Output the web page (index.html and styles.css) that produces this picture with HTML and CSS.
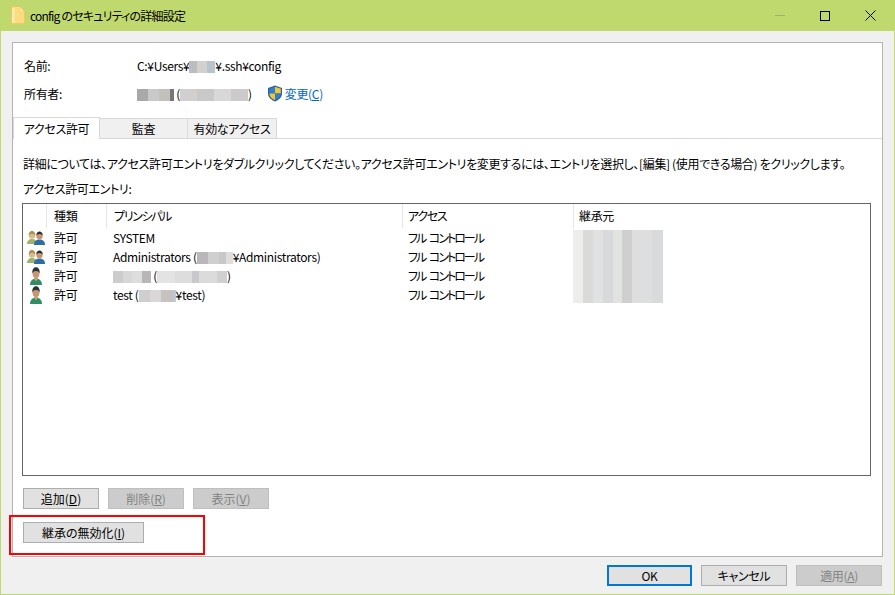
FILE: index.html
```html
<!DOCTYPE html>
<html lang="ja">
<head>
<meta charset="utf-8">
<title>config のセキュリティの詳細設定</title>
<link rel="stylesheet" href="styles.css">
</head>
<body>
<div class="window">
  <header class="titlebar">
    <svg class="folder" width="14" height="18" viewBox="0 0 14 18"><path d="M.5.5h8l5 5v12H.5z" fill="#fbdc7e" stroke="#efc860"/><path d="M9 1v5h4" fill="#fdeeb5" stroke="#f2d27a"/><path d="M1 2h3v15H1z" fill="#fde9a6"/></svg>
    <span class="title">config のセキュリティの詳細設定</span>
    <div class="controls">
      <span class="ctl"><i class="min"></i></span>
      <span class="ctl"><i class="max"></i></span>
      <span class="ctl"><svg width="11" height="11" viewBox="0 0 11 11"><path d="M.5.5l10 10M10.5.5l-10 10" stroke="#000" stroke-width="1"/></svg></span>
    </div>
  </header>

  <main class="body">
    <section class="panel">
      <div class="info">
        <div class="info-row">
          <span class="info-label">名前:</span>
          <span class="info-value">C:¥Users¥<i class="blur b-user"></i>¥.ssh¥config</span>
        </div>
        <div class="info-row">
          <span class="info-label">所有者:</span>
          <span class="info-value"><i class="blur b-owner"></i>&nbsp;(<i class="blur b-owner2"></i>)</span>
          <svg class="shield" width="16" height="17" viewBox="0 0 16 17"><path d="M8 .5l7 2.500v5.500c0 4-3.500 6.500-7 8-3.500-1.500-7-4-7-8V3z" fill="#2b5f9e"/><path d="M8 1.800V8.500H2.200V3.800z" fill="#2f7fd0"/><path d="M8 1.800l5.800 2V8.500H8z" fill="#f6c42f"/><path d="M2.300 8.500H8v6.800c-3-1.400-5.500-3.400-5.700-6.800z" fill="#f6c42f"/><path d="M8 8.500h5.700c-.2 3.400-2.700 5.400-5.700 6.800z" fill="#2f7fd0"/></svg>
          <a class="link">変更(<u>C</u>)</a>
        </div>
      </div>
      <nav class="tabs">
        <span class="tab active">アクセス許可</span>
        <span class="tab t2">監査</span>
        <span class="tab t3">有効なアクセス</span>
      </nav>
      <div class="tab-body">
        <p class="help">詳細については、アクセス許可エントリをダブルクリックしてください。アクセス許可エントリを変更するには、エントリを選択し、[編集] (使用できる場合) をクリックします。</p>
        <p class="caption">アクセス許可エントリ:</p>
        <div class="list">
          <div class="list-head">
            <span class="c0"></span>
            <span class="c1">種類</span>
            <span class="c2 kana">プリンシパル</span>
            <span class="c3 kana">アクセス</span>
            <span class="c4">継承元</span>
          </div>
          <div class="rows">
            <i class="blur b-inherit"></i>
            <div class="row">
              <span class="c0"><svg class="ico"><use href="#group"/></svg></span>
              <span class="c1">許可</span><span class="c2">SYSTEM</span><span class="c3 kana">フル コントロール</span>
            </div>
            <div class="row">
              <span class="c0"><svg class="ico"><use href="#group"/></svg></span>
              <span class="c1">許可</span><span class="c2">Administrators (<i class="blur b-dom"></i>¥Administrators)</span><span class="c3 kana">フル コントロール</span>
            </div>
            <div class="row">
              <span class="c0"><svg class="ico"><use href="#person"/></svg></span>
              <span class="c1">許可</span><span class="c2"><i class="blur b-name"></i> (<i class="blur b-mail"></i>)</span><span class="c3 kana">フル コントロール</span>
            </div>
            <div class="row">
              <span class="c0"><svg class="ico"><use href="#person"/></svg></span>
              <span class="c1">許可</span><span class="c2">test (<i class="blur b-dom2"></i>¥test)</span><span class="c3 kana">フル コントロール</span>
            </div>
          </div>
        </div>
        <div class="actions">
          <button class="btn">追加(<u>D</u>)</button>
          <button class="btn off">削除(<u>R</u>)</button>
          <button class="btn off">表示(<u>V</u>)</button>
        </div>
        <div class="actions second">
          <button class="btn wide">継承の無効化(<u>I</u>)</button>
        </div>
      </div>
    </section>
    <footer class="footer">
      <button class="btn foot ok">OK</button>
      <button class="btn foot">キャンセル</button>
      <button class="btn foot off">適用(<u>A</u>)</button>
    </footer>
    <div class="highlight"></div>
  </main>
</div>
<svg class="defs" width="0" height="0">
  <symbol id="person" viewBox="0 0 18 18">
    <path d="M3 18c0-4 2.500-6.500 6-6.500s6 2.500 6 6.500z" fill="#2f8f63"/>
    <path d="M7.500 11.500L9 14l1.500-2.500z" fill="#d9efe3"/>
    <ellipse cx="9" cy="6.500" rx="3.400" ry="4.500" fill="#c99670"/>
    <path d="M5.300 6.500C5 2 7 .3 9 .3s4 1.700 3.700 6.200c-.7-1.700-1.700-2.500-3.700-2.500s-3 .8-3.700 2.500z" fill="#2a3438"/>
    <path d="M7 10.800h4l-.3 2h-3.400z" fill="#c99670"/>
  </symbol>
  <symbol id="group" viewBox="0 0 18 16">
    <path d="M0 14c0-3 2-5 5-5s5 2 5 5z" fill="#9db36a"/>
    <circle cx="5" cy="5.500" r="3.200" fill="#dfb98e"/>
    <path d="M1.800 5.500c0-3.500 1.700-4.500 3.200-4.500s3.200 1 3.200 4.500c-1-1.200-2-1.800-3.200-1.800s-2.200.6-3.200 1.800z" fill="#a88f4c"/>
    <path d="M7 15c0-4 2.500-5.500 5.500-5.500S18 11 18 15z" fill="#2f6da8"/>
    <circle cx="12.500" cy="6" r="3.200" fill="#c8946c"/>
    <path d="M9.300 5.500C9.300 2.500 11 1.500 12.500 1.500s3.200 1 3.200 4c-1-1-2-1.500-3.200-1.500s-2.200.5-3.200 1.500z" fill="#262c30"/>
  </symbol>
</svg>
</body>
</html>
```

FILE: styles.css
```css
* { box-sizing: border-box; }
html, body { margin: 0; padding: 0; }
body {
  width: 895px;
  height: 595px;
  overflow: hidden;
  font-family: "Noto Sans CJK JP", "Noto Sans", sans-serif;
  font-size: 12px;
  font-feature-settings: "palt";
  letter-spacing: -.34px;
  color: #000;
  background: #f0f0f0;
}
.window {
  position: relative;
  width: 895px;
  height: 595px;
  display: flex;
  flex-direction: column;
  border: 1px solid #c0d96f;
  border-top: 0;
}
.titlebar {
  height: 31px;
  flex: none;
  margin: 0 -1px;
  background: #c0d96f;
  display: flex;
  align-items: center;
  padding-left: 11px;
  padding-right: 2px;
}
.folder { margin-top: -1px; }
.title { margin-left: 5px; font-size: 12px; letter-spacing: -.8px; }
.controls { margin-left: auto; display: flex; }
.ctl { width: 45px; height: 31px; display: flex; align-items: center; justify-content: center; }
.min { width: 10px; height: 1px; background: #9fb35c; margin-right: 1px; }
.max { width: 10px; height: 10px; border: 1px solid #000; margin-right: 1px; }
.body {
  position: relative;
  flex: 1;
  display: flex;
  flex-direction: column;
  padding: 11px 11px 0 11px;
  min-height: 0;
}
.panel {
  height: 515px;
  flex: none;
  background: #fff;
  border: 1px solid #b4b4b4;
  display: flex;
  flex-direction: column;
}
.info { padding: 13px 11px 0 11px; height: 75px; }
.info-row { display: flex; align-items: center; height: 18px; margin-bottom: 10px; }
.info-label { width: 113px; }
.info-value { white-space: nowrap; }
.shield { margin-left: 15px; }
.link { margin-left: 2px; color: #0066cc; }
.blur { display: inline-block; vertical-align: -2px; height: 12px; }
.b-user { width: 26px; background: linear-gradient(90deg, #bdbdbd 0 30%, #d3d1d0 30% 70%, #b8c4cc 70%); }
.b-owner { width: 37px; background: linear-gradient(90deg, #a9a9a9 0 30%, #c9c9c9 30% 60%, #c4c0bc 60% 90%, #777 90%); }
.b-owner2 { width: 68px; background: linear-gradient(90deg, #d2cfcd 0 25%, #c9c9c9 25% 50%, #d8d8d8 50% 75%, #cccaca 75%); }
.b-dom { width: 36px; background: linear-gradient(90deg, #b9b7b9 0 30%, #d0cfcf 30% 60%, #c9c7c8 60% 80%, #dedede 80%); }
.b-dom2 { width: 37px; background: linear-gradient(90deg, #d0cfd0 0 30%, #dad7d6 30% 60%, #c7c2c2 60% 95%, #b6cfe0 95%); }
.b-name { width: 38px; background: linear-gradient(90deg, #cdcbcb 0 25%, #d8d7d7 25% 50%, #dedddd 50% 75%, #b7b7b9 75%); }
.b-mail { width: 70px; background: linear-gradient(90deg, #e3e3e3 0 25%, #dedddd 25% 50%, #c9c9cb 50% 60%, #dcdbdb 60% 85%, #d0d0d0 85%); }
.tabs { display: flex; height: 22px; flex: none; margin-top: -1px; position: relative; z-index: 1; }
.tab {
  height: 21px;
  margin-top: 1px;
  width: 88px;
  background: #f0f0f0;
  border: 1px solid #d9d9d9;
  border-left: 0;
  text-align: center;
  line-height: 19px;
  white-space: nowrap;
}
.tab.active { width: 87px; height: 22px; margin-top: 0; background: #fff; border: 1px solid #d9d9d9; border-bottom: 0; line-height: 21px; }
.t3 { width: 89px; }
.tab-body {
  flex: 1;
  border-top: 1px solid #d9d9d9;
  padding: 16px 11px 0 9px;
  margin-top: -1px;
}
.help { margin: 0 0 0 1px; height: 18px; line-height: 18px; white-space: nowrap; }
.caption { margin: 7px 0 0 1px; height: 18px; line-height: 18px; }
.list {
  height: 273px;
  margin-top: 5px;
  border: 1px solid #646464;
  background: #fff;
}
.list-head { display: flex; height: 24px; line-height: 24px; }
.list-head span { border-right: 1px solid #e5e5e5; height: 24px; padding-left: 7px; }
.list-head .c4 { border-right: 0; padding-left: 5px; }
.c0 { width: 24px; flex: none; padding-left: 0 !important; }
.c1 { width: 60px; flex: none; padding-left: 7px; }
.c2 { width: 296px; flex: none; padding-left: 6px; white-space: nowrap; }
.c3 { width: 171px; flex: none; padding-left: 5px; white-space: nowrap; }
.list-head .c3 { padding-left: 5px; }
.c4 { flex: 1; }
.kana { letter-spacing: -1.3px; }
.row .kana { letter-spacing: -2px; word-spacing: 3px; }
.rows { position: relative; }
.row { display: flex; height: 19px; line-height: 19px; align-items: center; }
.row .c0 { display: flex; align-items: center; padding-left: 4px !important; }
.ico { width: 18px; height: 18px; }
.b-inherit {
  position: absolute;
  left: 550px;
  top: 2px;
  width: 90px;
  height: 73px;
  background: linear-gradient(90deg, #ededed 0 11%, #dadad8 11% 22%, #e0e1e0 22% 33%, #d8d9da 33% 44%, #e2e2e0 44% 55%, #cfcfcf 55% 66%, #dedede 66% 88%, #d9dadb 88%);
}
.actions { display: flex; gap: 9px; margin: 12px 0 0 1px; }
.actions.second { margin-top: 13px; }
.btn {
  width: 76px;
  height: 21px;
  padding: 0;
  font: inherit;
  font-feature-settings: "palt";
  letter-spacing: 0;
  color: #000;
  background: #e1e1e1;
  border: 1px solid #adadad;
}
.btn.off { color: #838383; background: #cccccc; border-color: #bfbfbf; }
.wide { width: 121px; }
.footer { display: flex; justify-content: flex-end; gap: 9px; margin-top: 8px; padding-right: 1px; }
.foot { width: 85px; height: 21px; letter-spacing: -.34px; }
.foot.ok { border: 2px solid #0078d7; }
.foot:nth-child(2) { width: 86px; }
.foot.off { width: 86px; }
.highlight {
  position: absolute;
  left: 8px;
  top: 484px;
  width: 196px;
  height: 40px;
  border: 2px solid #ff0000;
}
.defs { position: absolute; }
```
